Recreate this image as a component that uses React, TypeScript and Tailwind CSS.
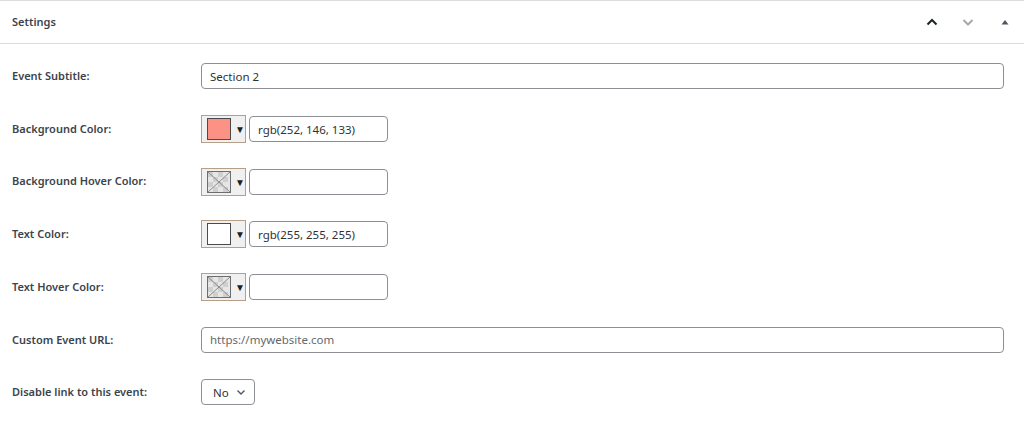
import React from 'react';

const font = { fontFamily: '"Noto Sans", "Open Sans", sans-serif' };

const Swatch: React.FC<{ color?: string }> = ({ color }) => (
  <button className="flex h-[28px] w-[45px] items-center gap-[4px] border border-[#b59f88] bg-[#f0f0f0] pl-[5px]">
    {color ? (
      <span className="block h-[22px] w-[24px] border border-[#4b4b4b]" style={{ backgroundColor: color }} />
    ) : (
      <svg width="24" height="22" viewBox="0 0 24 22" className="block">
        <rect x="0.5" y="0.5" width="23" height="21" fill="#e6e6e6" stroke="#6e6e6e" />
        <rect x="1" y="1" width="5" height="5" fill="#cfcfcf" />
        <rect x="11" y="1" width="5" height="5" fill="#cfcfcf" />
        <rect x="6" y="6" width="5" height="5" fill="#cfcfcf" />
        <rect x="16" y="6" width="5" height="5" fill="#cfcfcf" />
        <rect x="1" y="11" width="5" height="5" fill="#cfcfcf" />
        <rect x="11" y="11" width="5" height="5" fill="#cfcfcf" />
        <rect x="6" y="16" width="5" height="5" fill="#cfcfcf" />
        <rect x="16" y="16" width="5" height="5" fill="#cfcfcf" />
        <path d="M1 1 L23 21 M23 1 L1 21" stroke="#8a8a8a" strokeWidth="1" />
      </svg>
    )}
    <span className="text-[10px] leading-none text-[#1e1e1e]">▼</span>
  </button>
);

const Row: React.FC<{ label: string; children: React.ReactNode }> = ({ label, children }) => (
  <div className="flex h-[52.7px] items-center">
    <label className="w-[201px] pl-3 text-[11px] font-semibold text-[#3c434a]">{label}</label>
    <div className="flex flex-1 items-center pr-[20px]">{children}</div>
  </div>
);

const inputCls =
  'h-[26px] rounded-[4px] border border-[#8c8f94] px-2 text-[11.5px] text-[#2c3338] outline-none';

export default function App() {
  return (
    <div className="min-h-screen bg-white" style={font}>
      <div className="flex h-[44px] items-center justify-between border-t border-b border-[#dcdcde]">
        <h2 className="pl-3 text-[11px] font-semibold text-[#3c434a]">Settings</h2>
        <div className="flex items-center">
          <button className="flex h-[36px] w-[36px] items-center justify-center">
            <svg width="14" height="14" viewBox="0 0 14 14">
              <path d="M2.5 9.5 L7 5 L11.5 9.5" fill="none" stroke="#1d2327" strokeWidth="2" />
            </svg>
          </button>
          <button className="flex h-[36px] w-[36px] items-center justify-center">
            <svg width="14" height="14" viewBox="0 0 14 14">
              <path d="M2.5 5 L7 9.5 L11.5 5" fill="none" stroke="#a7aaad" strokeWidth="2" />
            </svg>
          </button>
          <button className="flex h-[36px] w-[38px] items-center justify-center">
            <svg width="10" height="10" viewBox="0 0 10 10">
              <path d="M1.5 7.5 L5 3 L8.5 7.5 Z" fill="#50575e" />
            </svg>
          </button>
        </div>
      </div>

      <div className="pt-[6px]">
        <Row label="Event Subtitle:">
          <input defaultValue="Section 2" className={`${inputCls} w-full`} />
        </Row>
        <Row label="Background Color:">
          <div className="flex items-center gap-[3px]">
            <Swatch color="rgb(252, 146, 133)" />
            <input defaultValue="rgb(252, 146, 133)" className={`${inputCls} w-[139px]`} />
          </div>
        </Row>
        <Row label="Background Hover Color:">
          <div className="flex items-center gap-[3px]">
            <Swatch />
            <input className={`${inputCls} w-[139px]`} />
          </div>
        </Row>
        <Row label="Text Color:">
          <div className="flex items-center gap-[3px]">
            <Swatch color="#ffffff" />
            <input defaultValue="rgb(255, 255, 255)" className={`${inputCls} w-[139px]`} />
          </div>
        </Row>
        <Row label="Text Hover Color:">
          <div className="flex items-center gap-[3px]">
            <Swatch />
            <input className={`${inputCls} w-[139px]`} />
          </div>
        </Row>
        <Row label="Custom Event URL:">
          <input
            placeholder="https://mywebsite.com"
            className={`${inputCls} w-full placeholder:text-[#646970]`}
          />
        </Row>
        <Row label="Disable link to this event:">
          <div className="flex h-[26px] w-[54px] items-center justify-between rounded-[4px] border border-[#8c8f94] pl-[11px] pr-[8px] text-[11.5px] text-[#2c3338]">
            <span>No</span>
            <svg width="10" height="10" viewBox="0 0 10 10">
              <path d="M1.5 3.5 L5 7 L8.5 3.5" fill="none" stroke="#50575e" strokeWidth="1.4" />
            </svg>
          </div>
        </Row>
      </div>
    </div>
  );
}
